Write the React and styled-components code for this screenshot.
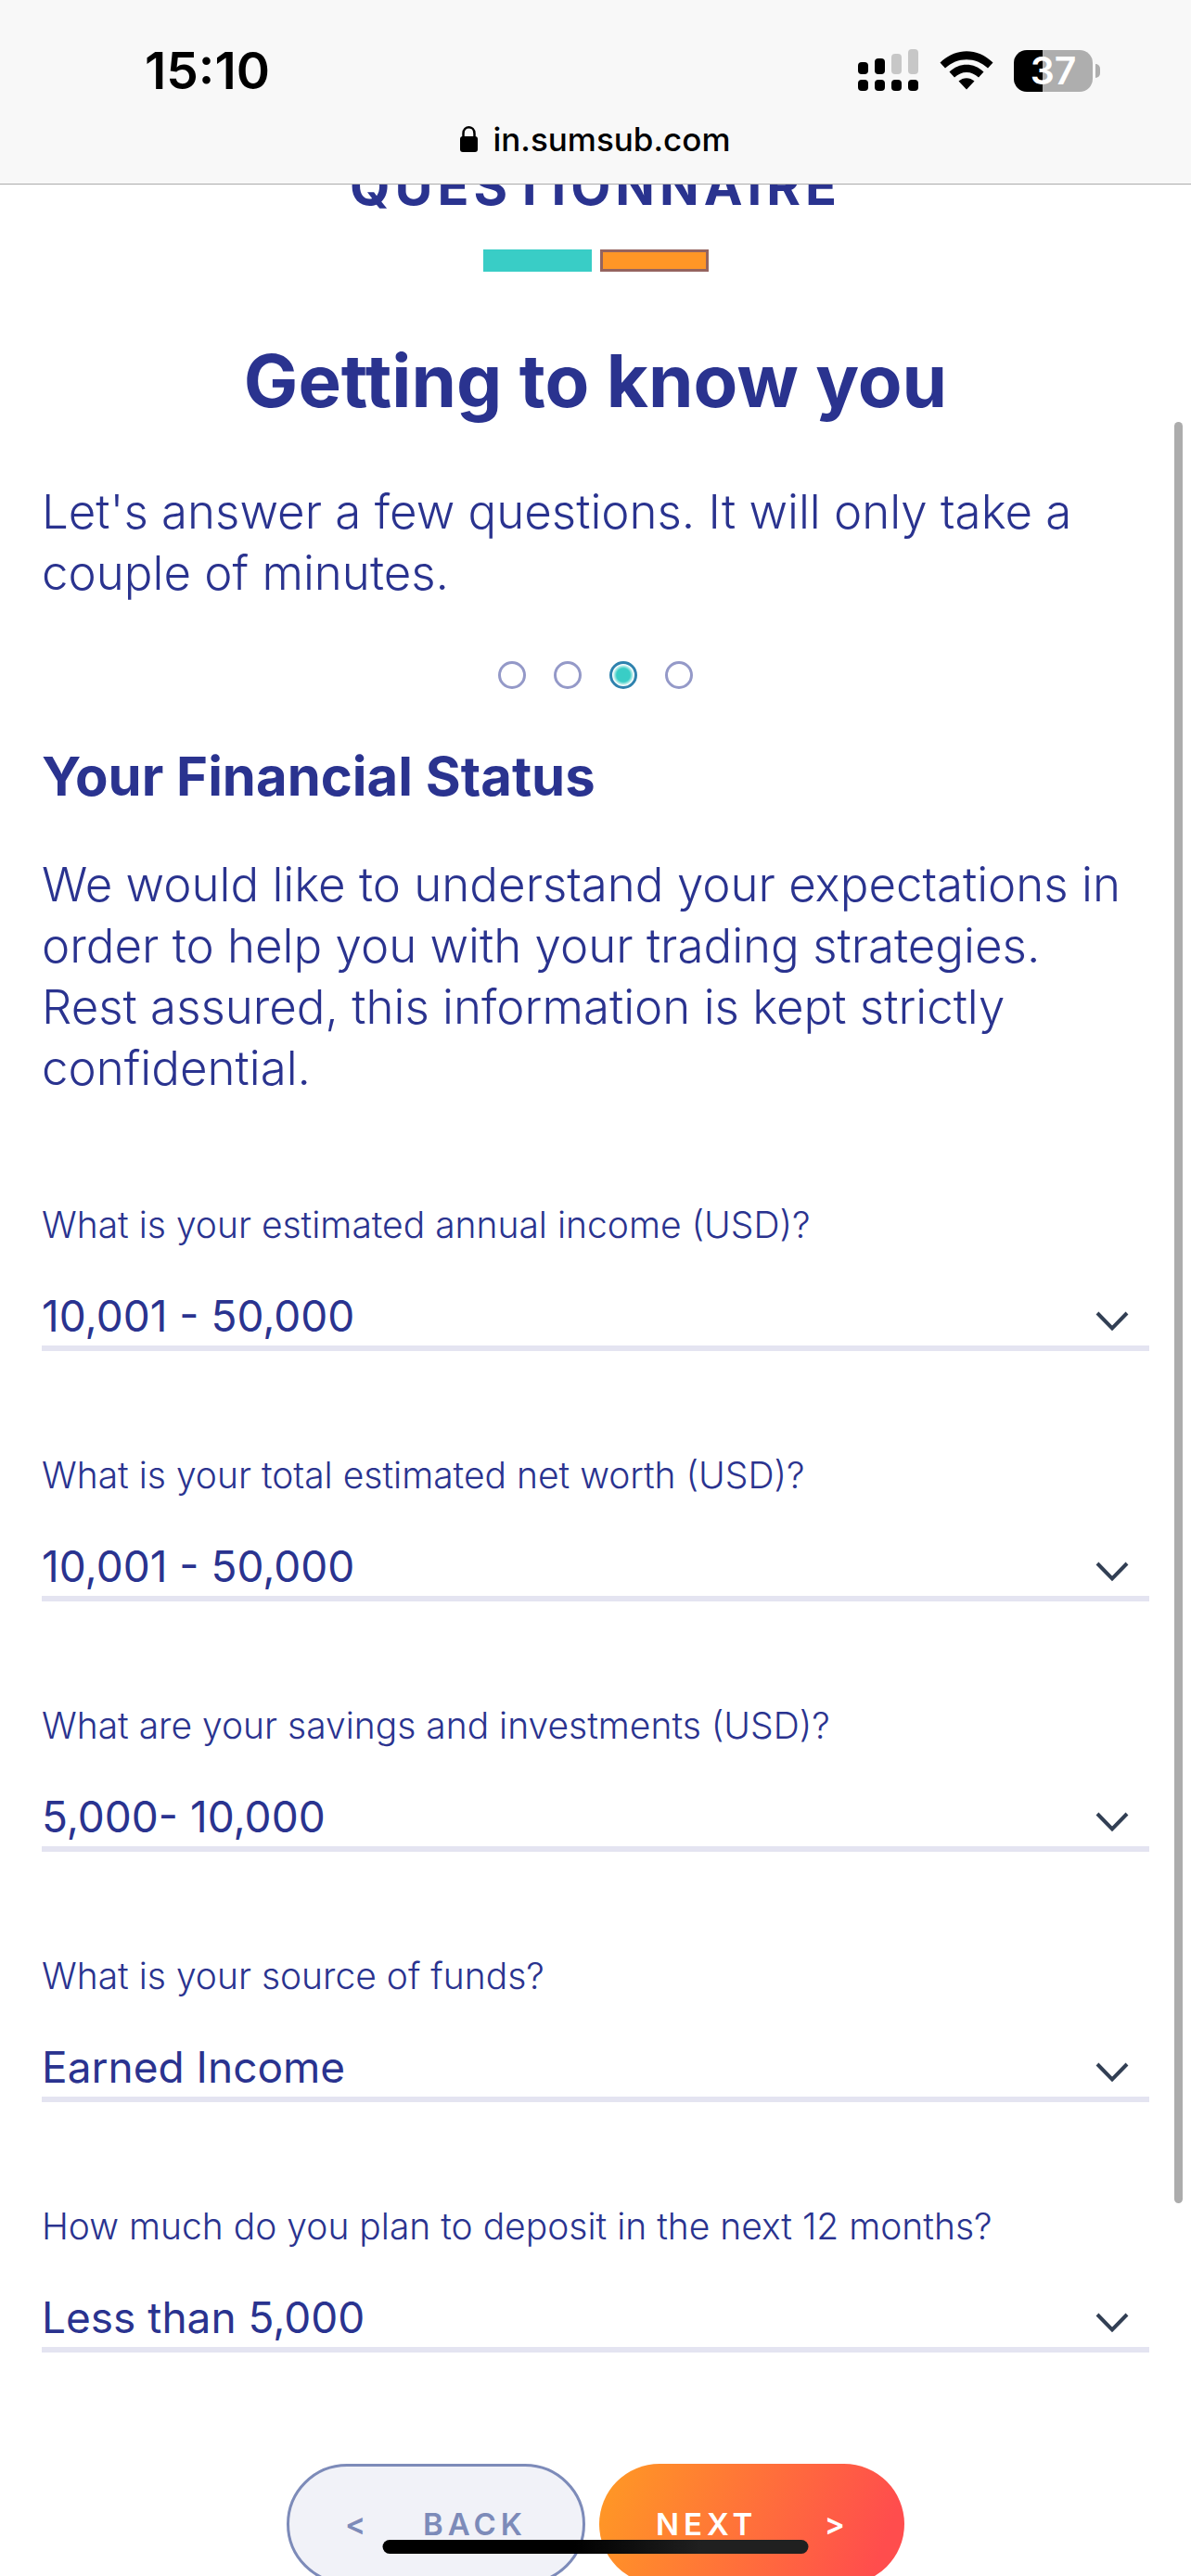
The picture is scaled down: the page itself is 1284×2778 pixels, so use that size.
import React, { useState } from 'react';

import styled, { createGlobalStyle } from 'styled-components';

const GlobalStyle = createGlobalStyle`
    * {
        box-sizing: border-box;
    }
    body {
        margin: 0;
        background: #FFFFFF;
        color: #2A338F;
        font-family: Inter, "Liberation Sans", sans-serif;
    }
    h1, h2, h3, p {
        margin: 0;
    }
`;

const Screen = styled.div`
    height: 100vh;
    display: flex;
    flex-direction: column;
    overflow: hidden;
    position: relative;
`;
const Header = styled.header`
    flex: none;
    background: #F8F8F8;
    border-bottom: 1px solid #ABABAB;
    color: #000;
    position: relative;
    z-index: 1;
`;
const StatusBar = styled.div`
    display: flex;
    justify-content: space-between;
    align-items: center;
    height: 120px;
    padding: 32px 98px 0 156px;
`;
const Clock = styled.time`
    font-size: 55px;
    line-height: 64px;
    font-weight: 600;
`;
const StatusIcons = styled.div`
    display: flex;
    align-items: center;
    gap: 22px;
`;
const Battery = styled.div`
    display: flex;
    align-items: center;
    gap: 3px;
`;
const BatteryBody = styled.div`
    width: 85px;
    height: 45px;
    border-radius: 14px;
    background: linear-gradient(to right, #000 37%, #AEAEAE 37%);
    color: #FFF;
    font-size: 41px;
    line-height: 45px;
    font-weight: 600;
    text-align: center;
`;
const BatteryTip = styled.div`
    width: 5px;
    height: 15px;
    border-radius: 0 5px 5px 0;
    background: #AEAEAE;
`;
const AddressBar = styled.div`
    display: flex;
    justify-content: center;
    align-items: center;
    gap: 15px;
    height: 78px;
    padding-bottom: 18px;
    font-size: 35px;
    line-height: 44px;
    font-weight: 500;
`;

const Main = styled.main`
    flex: 1;
    min-height: 0;
    overflow: hidden;
    padding: 0 45px;
    position: relative;
`;
/* the page is scrolled, so the title is partly under the header */
const Title = styled.h1`
    margin-top: -30px;
    font-size: 56px;
    line-height: 64px;
    font-weight: 700;
    letter-spacing: 5px;
    text-align: center;
`;
const Stages = styled.div`
    display: flex;
    justify-content: center;
    gap: 9px;
    margin-top: 36px;
`;
const Stage = styled.span`
    width: 117px;
    height: 24px;
    background: ${props => props.$current ? "#FF9626" : "#39CDC6"};
    ${props => props.$current && "border: 3px solid #95645F;"}
`;
const Heading = styled.h2`
    margin-top: 74px;
    font-size: 78px;
    line-height: 88px;
    font-weight: 700;
    text-align: center;
`;
const Text = styled.p`
    margin-top: ${props => props.$top};
    font-size: 51px;
    line-height: 66px;
    font-weight: 300;
`;
const Steps = styled.div`
    display: flex;
    justify-content: center;
    gap: 30px;
    margin-top: 62px;
`;
const Step = styled.span`
    width: 30px;
    height: 30px;
    border-radius: 50%;
    border: 3px solid ${props => props.$active ? "#2E82AE" : "#9499C8"};
    ${props => props.$active && "background: radial-gradient(closest-side, #39CDC6 60%, #FFF 95%);"}
`;
const SectionTitle = styled.h3`
    margin-top: 61px;
    font-size: 58px;
    line-height: 66px;
    font-weight: 700;
`;

const Form = styled.form`
    margin-top: 114px;
`;
const Fields = styled.div`
    display: flex;
    flex-direction: column;
    gap: 112px;
`;
const Field = styled.div`
    display: flex;
    flex-direction: column;
    gap: 34px;
`;
const Label = styled.label`
    font-size: 39px;
    line-height: 44px;
    font-weight: 300;
`;
const SelectBox = styled.div`
    display: flex;
    position: relative;
`;
const Select = styled.select`
    appearance: none;
    width: 100%;
    height: 80px;
    margin: 0;
    padding: 10px 80px 0 0;
    border: none;
    border-bottom: 6px solid #E4E4F1;
    border-radius: 0;
    background: transparent;
    color: inherit;
    font-family: inherit;
    font-size: 46px;
    outline: none;
`;
const Arrow = styled.svg`
    position: absolute;
    right: 22px;
    top: 37px;
    pointer-events: none;
`;

const Actions = styled.div`
    display: flex;
    justify-content: center;
    gap: 15px;
    margin-top: 120px;
`;
const Button = styled.button`
    display: flex;
    justify-content: space-between;
    align-items: center;
    width: ${props => props.$primary ? "329px" : "322px"};
    height: 130px;
    padding: ${props => props.$primary ? "0 64px 0 61px" : "0 60px"};
    border: ${props => props.$primary ? "none" : "3px solid #7D8BB9"};
    border-radius: 65px;
    background: ${props => props.$primary ? "linear-gradient(110deg, #FF9626 5%, #FF4D4D 90%)" : "#F1F2F8"};
    color: ${props => props.$primary ? "#FFF" : "#7D8BB9"};
    font-family: inherit;
    font-size: 33px;
    line-height: 40px;
    font-weight: 600;
`;
const Word = styled.span`
    letter-spacing: 5px;
`;

const ScrollThumb = styled.div`
    position: absolute;
    right: 9px;
    top: 256px;
    width: 9px;
    height: 1921px;
    border-radius: 5px;
    background: #ACACAC;
`;
const HomeIndicator = styled.div`
    position: absolute;
    left: 50%;
    bottom: 24px;
    transform: translateX(-50%);
    width: 459px;
    height: 15px;
    border-radius: 8px;
    background: linear-gradient(to right, #000 45%, #202020 75%);
`;

const SignalIcon = () => (
    <svg width="66" height="46" viewBox="0 0 66 46" aria-hidden="true">
        <rect x="0" y="14" width="11" height="13" rx="4" />
        <rect x="18" y="10" width="11" height="17" rx="4" />
        <rect x="36" y="5" width="11" height="22" rx="4" fill="#C7C7C7" />
        <rect x="54" y="0" width="11" height="27" rx="4" fill="#C7C7C7" />
        <rect x="0" y="33" width="11" height="12" rx="4" />
        <rect x="18" y="33" width="11" height="12" rx="4" />
        <rect x="36" y="33" width="11" height="12" rx="4" />
        <rect x="54" y="33" width="11" height="12" rx="4" />
    </svg>
);

const WifiIcon = () => (
    <svg width="58" height="42" viewBox="0 0 58 42" aria-hidden="true">
        <path d="M0.5 12.5C17 -4 41 -4 57.5 12.5L52 18.5C39 6 19 6 6 18.5Z" />
        <path d="M10.5 22.5C21 12 37 12 47.5 22.5L42 28.5C34.5 21 23.5 21 16 28.5Z" />
        <path d="M20.5 32.5C25.5 28 32.5 28 37.5 32.5L29 41.5Z" />
    </svg>
);

const LockIcon = () => (
    <svg width="20" height="28" viewBox="0 0 20 28" aria-hidden="true">
        <rect x="0" y="11" width="19" height="17" rx="3" />
        <path d="M3.5 12V8C3.5 -1 15.5 -1 15.5 8V12" fill="none" stroke="#000" strokeWidth="2.5" />
    </svg>
);

const SelectField = ({ id, label, options }) => {

    const [value, setValue] = useState(options[0]);

    return <Field>
        <Label htmlFor={id}>{label}</Label>
        <SelectBox>
            <Select id={id} value={value} onChange={e => setValue(e.target.value)}>
                {options.map(option => <option key={option}>{option}</option>)}
            </Select>
            <Arrow width="36" height="22" viewBox="0 0 36 22" aria-hidden="true">
                <path d="M2 2L18 18.5L34 2" fill="none" stroke="#323F54" strokeWidth="4" />
            </Arrow>
        </SelectBox>
    </Field>
}

const questions = [
    { id: "income", label: "What is your estimated annual income (USD)?", options: ["10,001 - 50,000"] },
    { id: "worth", label: "What is your total estimated net worth (USD)?", options: ["10,001 - 50,000"] },
    { id: "savings", label: "What are your savings and investments (USD)?", options: ["5,000- 10,000"] },
    { id: "source", label: "What is your source of funds?", options: ["Earned Income"] },
    { id: "deposit", label: "How much do you plan to deposit in the next 12 months?", options: ["Less than 5,000"] },
];

const App = () => {
    return <Screen>
        <GlobalStyle />
        <Header>
            <StatusBar>
                <Clock>15:10</Clock>
                <StatusIcons>
                    <SignalIcon />
                    <WifiIcon />
                    <Battery>
                        <BatteryBody>37</BatteryBody>
                        <BatteryTip />
                    </Battery>
                </StatusIcons>
            </StatusBar>
            <AddressBar>
                <LockIcon />
                in.sumsub.com
            </AddressBar>
        </Header>
        <Main>
            <Title>QUESTIONNAIRE</Title>
            <Stages>
                <Stage />
                <Stage $current />
            </Stages>
            <Heading>Getting to know you</Heading>
            <Text $top="64px">Let's answer a few questions. It will only take a couple of minutes.</Text>
            <Steps>
                <Step />
                <Step />
                <Step $active />
                <Step />
            </Steps>
            <SectionTitle>Your Financial Status</SectionTitle>
            <Text $top="51px">
                We would like to understand your expectations in order to help you with your
                trading strategies.
                <br />
                Rest assured, this information is kept strictly confidential.
            </Text>
            <Form onSubmit={e => e.preventDefault()}>
                <Fields>
                    {questions.map(question => <SelectField key={question.id} {...question} />)}
                </Fields>
                <Actions>
                    <Button type="button">
                        <span>&lt;</span>
                        <Word>BACK</Word>
                    </Button>
                    <Button type="submit" $primary>
                        <Word>NEXT</Word>
                        <span>&gt;</span>
                    </Button>
                </Actions>
            </Form>
            <ScrollThumb />
        </Main>
        <HomeIndicator />
    </Screen>
}

export default App;
